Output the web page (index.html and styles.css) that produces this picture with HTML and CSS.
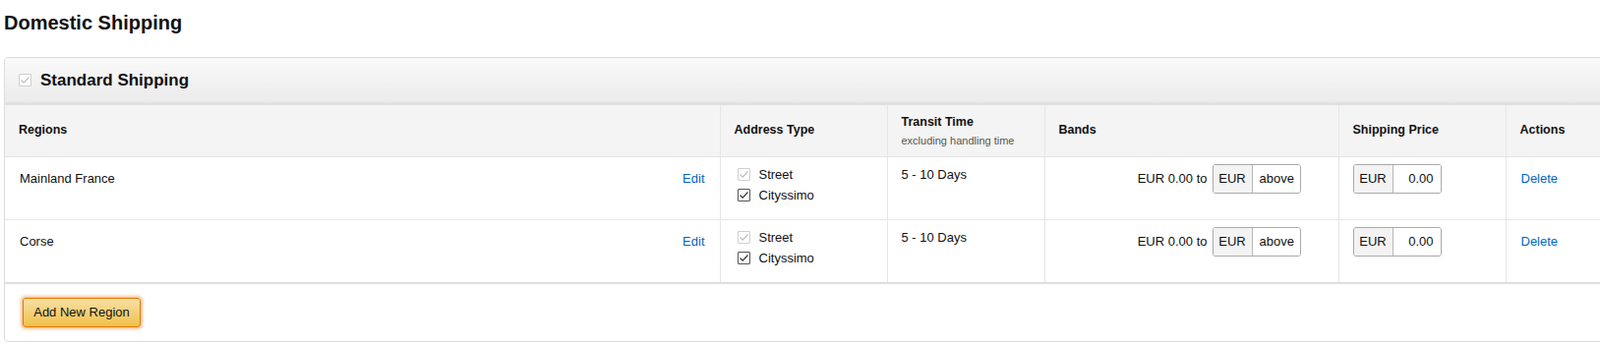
FILE: index.html
```html
<!DOCTYPE html>
<html lang="en">
  <head>
    <meta charset="UTF-8" />
    <meta name="viewport" content="width=device-width, initial-scale=1.0" />
    <title>Shipping Settings</title>
    <link rel="stylesheet" href="styles.css">
  </head>
  <body>
    <h1 class="page-title">Domestic Shipping</h1>

    <div class="ship-box">
      <div class="ship-box-head">
        <span class="check check-off">
          <svg viewBox="0 0 13 13" width="13" height="13"><polyline points="2.5,6.5 5.2,9.2 10.5,3.5" /></svg>
        </span>
        <h2>Standard Shipping</h2>
      </div>

      <table class="region-table">
        <colgroup>
          <col class="col-region" />
          <col class="col-address" />
          <col class="col-transit" />
          <col class="col-bands" />
          <col class="col-price" />
          <col class="col-actions" />
        </colgroup>
        <thead>
          <tr>
            <th>Regions</th>
            <th>Address Type</th>
            <th>
              <div>Transit Time</div>
              <div class="sub">excluding handling time</div>
            </th>
            <th>Bands</th>
            <th>Shipping Price</th>
            <th>Actions</th>
          </tr>
        </thead>
        <tbody>
          <tr>
            <td class="cell-region">
              <div class="region-line">
                <span>Mainland France</span>
                <a href="#" class="link">Edit</a>
              </div>
            </td>
            <td class="cell-address">
              <label class="opt">
                <span class="check check-off"><svg viewBox="0 0 13 13" width="13" height="13"><polyline points="2.5,6.5 5.2,9.2 10.5,3.5" /></svg></span>
                Street
              </label>
              <label class="opt">
                <span class="check check-on"><svg viewBox="0 0 13 13" width="13" height="13"><polyline points="2.5,6.5 5.2,9.2 10.5,3.5" /></svg></span>
                Cityssimo
              </label>
            </td>
            <td class="cell-transit">5 - 10 Days</td>
            <td class="cell-bands">
              <div class="bands-line">
                <span>EUR 0.00 to</span>
                <div class="money">
                  <span class="money-cur">EUR</span>
                  <span class="money-val val-left">above</span>
                </div>
              </div>
            </td>
            <td class="cell-price">
              <div class="money">
                <span class="money-cur">EUR</span>
                <span class="money-val">0.00</span>
              </div>
            </td>
            <td class="cell-actions"><a href="#" class="link">Delete</a></td>
          </tr>
          <tr>
            <td class="cell-region">
              <div class="region-line">
                <span>Corse</span>
                <a href="#" class="link">Edit</a>
              </div>
            </td>
            <td class="cell-address">
              <label class="opt">
                <span class="check check-off"><svg viewBox="0 0 13 13" width="13" height="13"><polyline points="2.5,6.5 5.2,9.2 10.5,3.5" /></svg></span>
                Street
              </label>
              <label class="opt">
                <span class="check check-on"><svg viewBox="0 0 13 13" width="13" height="13"><polyline points="2.5,6.5 5.2,9.2 10.5,3.5" /></svg></span>
                Cityssimo
              </label>
            </td>
            <td class="cell-transit">5 - 10 Days</td>
            <td class="cell-bands">
              <div class="bands-line">
                <span>EUR 0.00 to</span>
                <div class="money">
                  <span class="money-cur">EUR</span>
                  <span class="money-val val-left">above</span>
                </div>
              </div>
            </td>
            <td class="cell-price">
              <div class="money">
                <span class="money-cur">EUR</span>
                <span class="money-val">0.00</span>
              </div>
            </td>
            <td class="cell-actions"><a href="#" class="link">Delete</a></td>
          </tr>
        </tbody>
      </table>

      <div class="ship-box-foot">
        <button type="button" class="btn-add">Add New Region</button>
      </div>
    </div>
  </body>
</html>
```

FILE: styles.css
```css
html {
  overflow: hidden;
}

body {
  margin: 0;
  padding: 11px 0 0 4px;
  font-family: "Liberation Sans", Arial, sans-serif;
  font-size: 13px;
  line-height: 19px;
  color: #111;
  background: #fff;
}

.page-title {
  margin: 0 0 23px 0;
  font-size: 20px;
  line-height: 24px;
  font-weight: 700;
}

/* shipping box */
.ship-box {
  width: 1720px;
  border: 1px solid #dcdcdc;
  border-radius: 4px;
  overflow: hidden;
}

.ship-box-head {
  display: flex;
  align-items: center;
  gap: 9px;
  height: 45px;
  padding-left: 14px;
  background: linear-gradient(#fafafa, #ebebeb);
  border-bottom: 3px solid #e0e0e0;
}

.ship-box-head h2 {
  margin: 0;
  font-size: 17px;
  line-height: 22px;
  font-weight: 700;
}

/* checkboxes */
.check {
  display: inline-block;
  width: 13px;
  height: 13px;
  box-sizing: border-box;
  border: 1px solid #555;
  border-radius: 1px;
  background: #fff;
  flex: none;
}

.check svg {
  display: block;
  margin: -1px;
  fill: none;
  stroke: #333;
  stroke-width: 1.2;
}

.check-off {
  border-color: #cfcfcf;
}

.check-off svg {
  stroke: #bdbdbd;
}

/* table */
.region-table {
  width: 100%;
  table-layout: fixed;
  border-collapse: collapse;
}

.col-region { width: 727px; }
.col-address { width: 170px; }
.col-transit { width: 160px; }
.col-bands { width: 299px; }
.col-price { width: 170px; }

.region-table th {
  height: 52px;
  box-sizing: border-box;
  padding: 0 14px;
  text-align: left;
  vertical-align: middle;
  font-size: 12.5px;
  line-height: 17px;
  font-weight: 700;
  background: #f4f4f4;
  border-right: 1px solid #e6e6e6;
  border-bottom: 1px solid #e3e3e3;
}

.region-table th .sub {
  margin-top: 3px;
  font-size: 11px;
  line-height: 14px;
  font-weight: 400;
  color: #555;
}

.region-table td {
  vertical-align: top;
  padding: 12px 14px 0 14px;
  border-right: 1px solid #e6e6e6;
  border-bottom: 1px solid #e6e6e6;
}

.region-table tbody tr:last-child td {
  border-bottom: none;
}

.cell-region {
  padding-left: 15px !important;
  padding-right: 15px !important;
}

.region-line {
  display: flex;
  justify-content: space-between;
}

.cell-address {
  padding: 7px 0 14px 17px !important;
}

.opt {
  display: flex;
  align-items: center;
  gap: 9px;
  line-height: 21px;
}

.cell-transit {
  padding-top: 8px !important;
}

.cell-bands {
  padding: 7px 38px 0 0 !important;
}

.bands-line {
  display: flex;
  justify-content: flex-end;
  align-items: center;
  gap: 5px;
}

.cell-price {
  padding: 7px 0 0 14px !important;
}

.cell-actions {
  padding-left: 15px !important;
}

.link {
  color: #0066c0;
  text-decoration: none;
}

/* currency input */
.money {
  display: flex;
  width: 90px;
  height: 30px;
  box-sizing: border-box;
  border: 1px solid #a9a9a9;
  border-radius: 3px;
  overflow: hidden;
}

.money-cur {
  width: 39px;
  flex: none;
  display: flex;
  align-items: center;
  justify-content: center;
  background: #f3f3f3;
  border-right: 1px solid #b8b8b8;
}

.money-val {
  flex: 1;
  display: flex;
  align-items: center;
  justify-content: flex-end;
  padding-right: 7px;
  background: #fff;
}

.money-val.val-left {
  justify-content: flex-start;
  padding-left: 7px;
  padding-right: 0;
}

/* footer */
.ship-box-foot {
  padding: 14px 18px 14px 18px;
  border-top: 2px solid #dedede;
}

.btn-add {
  width: 120px;
  height: 30px;
  border: 1px solid #e77600;
  border-radius: 3px;
  background: linear-gradient(#f7dfa5, #f0c14b);
  box-shadow: 0 0 3px 2px rgba(228, 121, 17, 0.45);
  font-family: "Liberation Sans", Arial, sans-serif;
  font-size: 13px;
  color: #111;
  padding: 0;
  cursor: pointer;
}
```
